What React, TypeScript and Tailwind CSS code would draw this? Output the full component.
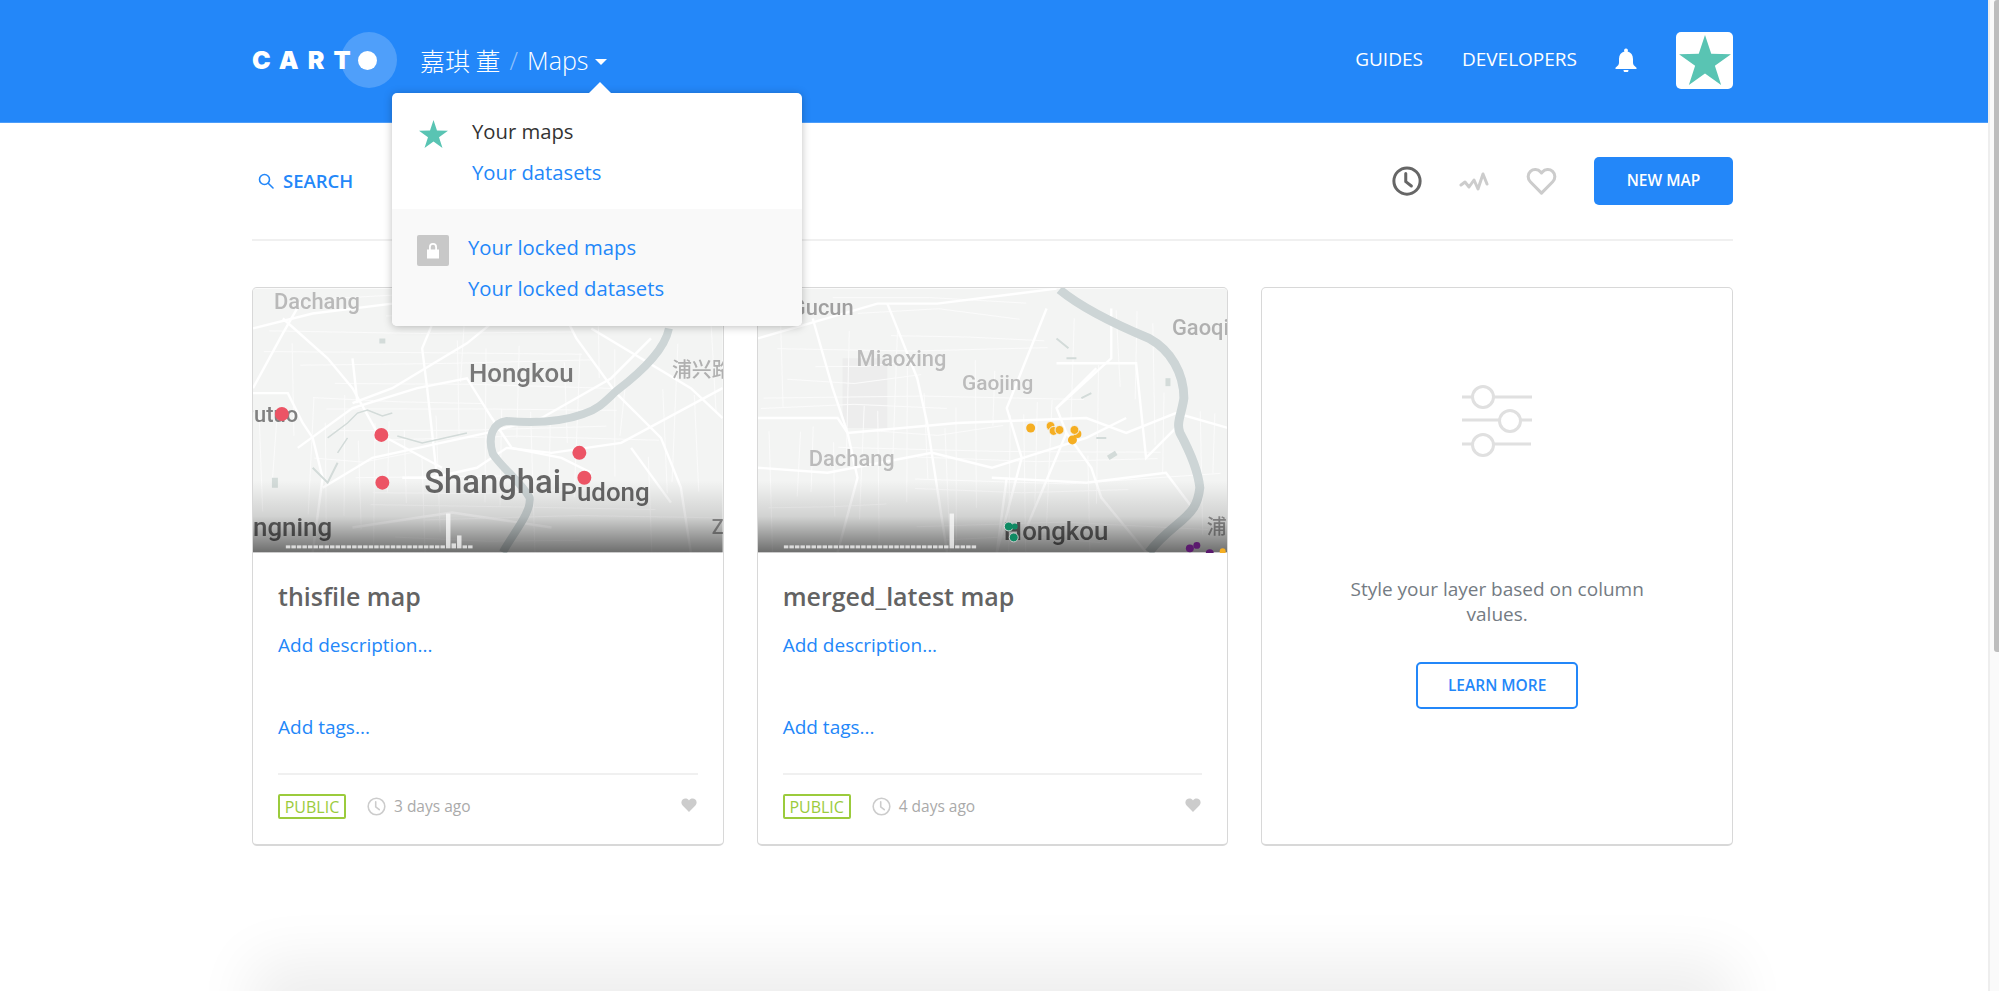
import React from 'react';

const BLUE = 'text-[#2387f9]';

const Star = ({ className }: { className?: string }) => (
  <svg viewBox="0 0 100 96" className={className}>
    <polygon points="50,0 62,36 100,37 69,59 81,96 50,74 19,96 31,59 0,37 38,36" fill="#59c4b3" />
  </svg>
);

const Heart = ({ className, filled }: { className?: string; filled?: boolean }) => (
  <svg viewBox="0 0 24 22" className={className}>
    <path
      d="M12 20.5 3.2 11.6C.9 9.2 1 5.6 3.3 3.4c2.300-2.100 5.900-1.900 8 .5l.7.8.7-.8c2.100-2.400 5.700-2.600 8-.5 2.300 2.200 2.400 5.800.1 8.200z"
      fill={filled ? '#cccccc' : 'none'}
      stroke="#cccccc"
      strokeWidth={filled ? 0 : 2.4}
      strokeLinejoin="round"
    />
  </svg>
);

const Clock = ({ className, color, width }: { className?: string; color: string; width: number }) => (
  <svg viewBox="0 0 24 24" className={className} fill="none" stroke={color} strokeWidth={width}>
    <circle cx="12" cy="12" r="10.500" />
    <path d="M11 6v6.500l4.500 3.500" strokeLinecap="round" strokeLinejoin="round" />
  </svg>
);

// small streets: a wobbly grid, same every render
function StreetGrid({ seed }: { seed: number }) {
  const rnd = (n: number) => {
    const v = Math.sin(n * 12.9898 + seed * 78.233) * 43758.5453;
    return v - Math.floor(v);
  };
  const lines: string[] = [];
  for (let i = 0; i < 17; i++) {
    const y = 8 + i * 16 + rnd(i) * 8;
    const start = rnd(i + 40) * 200;
    const end = start + 90 + rnd(i + 60) * 240;
    lines.push(`M${start} ${y}L${(start + end) / 2} ${y + rnd(i + 80) * 10 - 5}L${end} ${y + rnd(i + 90) * 12 - 6}`);
  }
  for (let i = 0; i < 30; i++) {
    const x = 6 + i * 16 + rnd(i + 100) * 8;
    const start = rnd(i + 140) * 170;
    const end = start + 50 + rnd(i + 160) * 120;
    lines.push(`M${x} ${start}L${x + rnd(i + 180) * 12 - 6} ${end}`);
  }
  return <path d={lines.join('')} stroke="#fbfbfb" strokeWidth="1" />;
}

function Histogram({ from, count, bars }: { from: number; count: number; bars: Record<number, number> }) {
  return (
    <g fill="#ffffff" fillOpacity="0.72">
      {Array.from({ length: count }, (_, i) => {
        const h = bars[i] ?? 3;
        return <rect key={i} x={from + i * 5.55} y={261 - h} width={4.5} height={h} />;
      })}
    </g>
  );
}

const labelFont = { fontFamily: 'Roboto, sans-serif', fontWeight: 500 };
const cjkFont = { fontFamily: '"Noto Sans CJK SC", sans-serif' };

function MapDefs({ id }: { id: string }) {
  return (
    <defs>
      <linearGradient id={`fade-${id}`} x1="0" y1="0" x2="0" y2="1">
        <stop offset="0" stopColor="#000" stopOpacity="0" />
        <stop offset="0.5" stopColor="#000" stopOpacity="0.14" />
        <stop offset="1" stopColor="#000" stopOpacity="0.55" />
      </linearGradient>
      <filter id={`soft-${id}`}><feGaussianBlur stdDeviation="0.55" /></filter>
      <filter id={`label-${id}`}><feGaussianBlur stdDeviation="0.35" /></filter>
    </defs>
  );
}

// rough trace of the basemap behind the first card
function ShanghaiMap() {
  return (
    <svg viewBox="0 0 472 265" className="block h-[265px] w-full" style={labelFont}>
      <MapDefs id="a" />
      <rect width="472" height="265" fill="#f3f4f3" />
      <g filter="url(#soft-a)" fill="none">
        <StreetGrid seed={3} />
        <g stroke="#ffffff" strokeWidth="2.400">
          <path d="M0 100L30 45 50 10M0 105H35L50 135 60 150 70 190 60 265" />
          <path d="M0 40L60 25 140 15 200 0M30 30L75 70 100 100 125 145 190 180" />
          <path d="M100 115L140 100 190 70 215 55 270 10 290 0" />
          <path d="M45 160L100 120 165 100 215 90 240 130 260 160 310 170 340 185" />
          <path d="M70 200L120 170 235 145 290 130 360 90 400 50" />
          <path d="M150 190H180L225 180 255 160 300 165 370 155 472 100" />
          <path d="M300 0L325 50 365 105 410 150 430 200 440 265" />
          <path d="M340 40L440 100 472 130M195 0L170 60 175 100M100 70L105 115" />
          <path d="M175 100L185 190M380 160L420 215M100 240L200 225 300 240" />
        </g>
        <path d="M418 40C414 60 395 80 365 103 355 112 348 121 332 126 310 134 280 135 255 133 240 135 236 150 241 166 250 180 270 195 278 210 280 225 262 245 251 265" stroke="#cdd5d6" strokeWidth="8" strokeLinejoin="round" />
        <path d="M75 150L95 135 105 125 115 122 130 128 140 125M85 165L95 150M145 148L170 155 215 145" stroke="#d3dbd9" strokeWidth="1.500" />
        <path d="M60 180L75 195 85 175" stroke="#d3dbd9" strokeWidth="2" />
        <path d="M22 190V200M130 50V55" stroke="#d3dbd9" strokeWidth="6" />
      </g>
      <g filter="url(#label-a)">
        <text x="21" y="20" fontSize="22" fill="#b9b9b9">Dachang</text>
        <text x="217" y="94" fontSize="26" fill="#787878">Hongkou</text>
        <text x="421" y="89" fontSize="20" fill="#b0b0b0" style={cjkFont}>浦兴路</text>
        <text x="-13" y="134" fontSize="22" fill="#808080">Putuo</text>
        <text x="172" y="205" fontSize="33" fill="#666666">Shanghai</text>
        <text x="309" y="213" fontSize="26" fill="#666666">Pudong</text>
        <text x="-14" y="249" fontSize="26" fill="#666666">angning</text>
        <text x="461" y="247" fontSize="20" fill="#999999">Z</text>
      </g>
      <rect y="193" width="472" height="72" fill="url(#fade-a)" />
      <g fill="#ec5465">
        <circle cx="29" cy="126" r="7" />
        <circle cx="129" cy="147" r="7" />
        <circle cx="130" cy="195" r="7" />
        <circle cx="328" cy="165" r="7" />
        <circle cx="333" cy="190" r="7" />
      </g>
      <Histogram from={33} count={34} bars={{ 29: 35, 30: 5, 31: 13 }} />
    </svg>
  );
}

// rough trace of the basemap behind the second card
function GaojingMap() {
  return (
    <svg viewBox="0 0 472 265" className="block h-[265px] w-full" style={labelFont}>
      <MapDefs id="b" />
      <rect width="472" height="265" fill="#f3f4f3" />
      <g filter="url(#soft-b)" fill="none">
        <rect x="85" y="70" width="45" height="70" fill="#ededed" />
        <StreetGrid seed={7} />
        <g stroke="#ffffff" strokeWidth="2.400">
          <path d="M0 50L120 15 180 15 300 0M0 130H80L90 145 200 135 330 130 370 145 420 125 472 140" />
          <path d="M55 30L75 100 90 145 100 190 80 265M130 15L160 90 170 135 180 200 190 265" />
          <path d="M290 20L250 120 265 170 240 265M310 145L335 180 345 210 390 265" />
          <path d="M0 180L70 185 175 165 235 180 330 150 370 130" />
          <path d="M310 145L270 240M340 80L300 120 310 145M355 20V70L300 120M250 190L240 265" />
          <path d="M235 190L330 195 410 185 440 225" />
          <path d="M300 75H380L390 170 420 140" />
        </g>
        <path d="M303 1C320 15 345 30 393 50 415 62 428 85 428 110 426 125 420 135 424 145 432 160 442 180 444 200 442 218 436 225 420 238 408 248 398 258 393 265" stroke="#cdd5d6" strokeWidth="9" strokeLinejoin="round" />
        <path d="M300 50L312 60M310 70H320M325 110L335 105M340 150H350" stroke="#d3dbd9" strokeWidth="2" />
        <path d="M352 170L360 165" stroke="#d3dbd9" strokeWidth="5" />
        <path d="M412 90V98" stroke="#d3dbd9" strokeWidth="5" />
      </g>
      <g filter="url(#label-b)">
        <text x="33" y="26" fontSize="22" fill="#9f9f9f">Gucun</text>
        <text x="416" y="47" fontSize="22" fill="#b0b0b0">Gaoqiao</text>
        <text x="99" y="78" fontSize="22" fill="#bbbbbb">Miaoxing</text>
        <text x="205" y="102" fontSize="21" fill="#bbbbbb">Gaojing</text>
        <text x="51" y="178" fontSize="22" fill="#bbbbbb">Dachang</text>
        <text x="247" y="253" fontSize="26" fill="#666666">Hongkou</text>
        <text x="451" y="247" fontSize="20" fill="#999999" style={cjkFont}>浦兴路</text>
      </g>
      <rect y="193" width="472" height="72" fill="url(#fade-b)" />
      <g fill="#f5ae22">
        <circle cx="274" cy="140" r="4.500" />
        <circle cx="294" cy="138" r="4.500" stroke="#f3f4f3" />
        <circle cx="297" cy="143" r="4.500" stroke="#f3f4f3" />
        <circle cx="303" cy="142" r="4.500" stroke="#f3f4f3" />
        <circle cx="321" cy="146" r="4" />
        <circle cx="318" cy="142" r="4.500" stroke="#f3f4f3" />
        <circle cx="316" cy="152" r="4.500" />
        <circle cx="467" cy="264" r="3" />
      </g>
      <g fill="#0f8a63">
        <circle cx="252" cy="239" r="4.500" stroke="#dddddd" strokeWidth="1" />
        <circle cx="258" cy="239" r="3" />
        <circle cx="257" cy="250" r="4.500" stroke="#cccccc" strokeWidth="1" />
      </g>
      <g fill="#5b1a6e">
        <circle cx="434" cy="261" r="4" />
        <circle cx="441" cy="258" r="3.500" />
        <circle cx="454" cy="266" r="4" />
      </g>
      <Histogram from={26} count={35} bars={{ 30: 35 }} />
    </svg>
  );
}

function MapCard({ title, age, map }: { title: string; age: string; map: React.ReactNode }) {
  return (
    <div className="h-[559px] overflow-hidden rounded-[5px] border border-b-2 border-[#d8d8d8]">
      {map}
      <div className="px-[25px]">
        <h3 className="mt-[25px] text-[25px] leading-[36px] font-semibold text-[#636363]">{title}</h3>
        <p className={`mt-[18px] text-[19px] leading-[26px] ${BLUE}`}>Add description...</p>
        <p className={`mt-[56px] text-[19px] leading-[26px] ${BLUE}`}>Add tags...</p>
        <div className="mt-[33px] flex items-center border-t-2 border-[#f0f0f0] pt-[19px]">
          <span className="flex h-[25px] w-[68px] items-center justify-center rounded-[2px] border-2 border-[#9bcb3c] text-[16px] font-medium text-[#9bcb3c]">
            PUBLIC
          </span>
          <Clock className="ml-[21px] h-[19px] w-[19px]" color="#cccccc" width={2} />
          <span className="ml-[8px] text-[15.500px] text-[#aaaaaa]">{age}</span>
          <Heart className="mt-[-4px] ml-auto h-[16px] w-[18px]" filled />
        </div>
      </div>
    </div>
  );
}

export default function App() {
  return (
    <div className="flex h-[991px] overflow-hidden bg-white font-['Open_Sans',sans-serif]">
      <div className="relative min-w-0 flex-1 overflow-hidden">
        <header className="h-[123px] border-b border-[#4c9dfa] bg-[#2387f9]">
          <div className="ml-[252px] flex h-[120px] w-[1481px] items-center">
            <div className="relative flex w-[168px] items-center">
              <span className="font-['Inter',sans-serif] text-[25px] leading-none font-black tracking-[9px] text-white">CART</span>
              <span className="absolute top-[-16px] left-[89px] h-[56px] w-[56px] rounded-full bg-white/20" />
              <span className="absolute top-[3px] left-[106px] h-[19px] w-[19px] rounded-full bg-white" />
            </div>
            <div className="flex items-center text-[25px] leading-none font-light text-white">
              <span className="font-['Noto_Sans_CJK_SC',sans-serif] font-light">嘉琪 董</span>
              <span className="mx-[9px] text-white/50">/</span>
              <span>Maps</span>
              <span className="mt-[4px] ml-[7px] h-0 w-0 border-x-[6px] border-t-[6px] border-x-transparent border-t-white" />
            </div>
            <nav className="ml-auto flex items-center text-[19px] font-medium text-white">
              <span className="mb-[2px]">GUIDES</span>
              <span className="mb-[2px] ml-[39px]">DEVELOPERS</span>
              <svg viewBox="0 0 24 24" className="ml-[37px] h-[24px] w-[24px]" fill="#ffffff">
                <path d="M12 .5a2 2 0 0 0-1.600 3.100C7 4.500 5 7.200 5 11v3.500c0 2-1 3.300-3.500 5.200V21h21v-1.300C20 17.800 19 16.500 19 14.500V11c0-3.800-2-6.500-5.400-7.400A2 2 0 0 0 12 .5z" />
                <path d="M9.500 22a2.500 2.500 0 0 0 5 0z" />
              </svg>
              <div className="ml-[38px] flex h-[57px] w-[57px] items-center justify-center rounded-[5px] bg-white">
                <Star className="h-[50px] w-[52px]" />
              </div>
            </nav>
          </div>
        </header>

        <main className="ml-[252px] w-[1481px]">
          <div className="flex h-[118px] items-center border-b-2 border-[#f0f0f0]">
            <svg viewBox="0 0 16 16" className="ml-[6px] h-[16px] w-[16px]" fill="none" stroke="#2387f9" strokeWidth="1.600">
              <circle cx="6.500" cy="6.500" r="5" />
              <path d="M10.500 10.500 15 15" strokeLinecap="round" />
            </svg>
            <span className={`ml-[9px] text-[18.500px] font-semibold ${BLUE}`}>SEARCH</span>
            <div className="ml-auto flex items-center">
              <Clock className="h-[30px] w-[30px]" color="#666666" width={2.400} />
              <svg viewBox="0 0 30 20" className="ml-[37px] h-[20px] w-[30px]" fill="none" stroke="#cccccc" strokeWidth="3" strokeLinecap="round" strokeLinejoin="round">
                <path d="M2 14l4-3 4 5 5-7 4 9 5-15 4 10" />
              </svg>
              <Heart className="ml-[37px] h-[28px] w-[31px]" />
              <button className="ml-[37px] h-[48px] w-[139px] rounded-[5px] bg-[#2387f9] text-[15.500px] font-semibold text-white">
                NEW MAP
              </button>
            </div>
          </div>

          <div className="mt-[46px] grid grid-cols-3 gap-[33px]">
            <MapCard title="thisfile map" age="3 days ago" map={<ShanghaiMap />} />
            <MapCard title="merged_latest map" age="4 days ago" map={<GaojingMap />} />
            <div className="flex h-[559px] flex-col items-center rounded-[5px] border border-b-2 border-[#d8d8d8] pt-[97px]">
              <svg viewBox="0 0 70 72" className="h-[72px] w-[70px]" fill="none" stroke="#e0e0e0" strokeWidth="3">
                <path d="M0 12h10M32 12h38M0 35h37M59 35h11M0 59h10M32 59h37" />
                <circle cx="21" cy="12" r="10.500" />
                <circle cx="48" cy="36" r="10.500" />
                <circle cx="21" cy="60" r="10.500" />
              </svg>
              <p className="mt-[120px] w-[320px] text-center text-[19px] leading-[25px] text-[#747b83]">
                Style your layer based on column values.
              </p>
              <button className={`mt-[35px] h-[47px] w-[162px] rounded-[5px] border-2 border-[#2387f9] text-[15.500px] font-semibold ${BLUE}`}>
                LEARN MORE
              </button>
            </div>
          </div>

          {/* next section just starts below the fold, only its shadow shows */}
          <div className="mx-[30px] mt-[145px] h-[40px] bg-[#eeeeee] shadow-[0_0_60px_30px_rgba(0,0,0,0.07)]" />
        </main>

        {/* account menu, open */}
        <div className="absolute top-[93px] left-[392px] h-[233px] w-[410px] rounded-[5px] bg-white shadow-[0_1px_8px_rgba(0,0,0,0.25)]">
          <div className="absolute top-[-11px] left-[197px] h-0 w-0 border-x-[11px] border-b-[11px] border-x-transparent border-b-white" />
          <div className="flex h-[116px]">
            <Star className="mt-[27px] ml-[27px] h-[28px] w-[29px]" />
            <div className="ml-[24px] flex flex-col pt-[23px] text-[20.250px] leading-[30px]">
              <span className="text-[#333333]">Your maps</span>
              <span className={`mt-[11px] ${BLUE}`}>Your datasets</span>
            </div>
          </div>
          <div className="flex h-[117px] rounded-b-[5px] bg-[#f9f9f9]">
            <div className="mt-[26px] ml-[25px] flex h-[31px] w-[32px] items-center justify-center rounded-[2px] bg-[#c8c8c8]">
              <svg viewBox="0 0 14 16" className="h-[17px] w-[14px]" fill="#ffffff">
                <path d="M3 7V4.500a4 4 0 0 1 8 0V7h2v9H1V7zm1.800 0h4.400V4.500a2.200 2.200 0 0 0-4.400 0z" />
              </svg>
            </div>
            <div className={`ml-[19px] flex flex-col pt-[23px] text-[20.250px] leading-[30px] ${BLUE}`}>
              <span>Your locked maps</span>
              <span className="mt-[11px]">Your locked datasets</span>
            </div>
          </div>
        </div>
      </div>

      {/* scrollbar */}
      <div className="flex w-[11px] shrink-0 justify-end border-l-2 border-[#eeeeee] bg-[#fafafa]">
        <div className="h-[652px] w-[5px] rounded-l-[3px] bg-[#bdbdbd]" />
      </div>
    </div>
  );
}
